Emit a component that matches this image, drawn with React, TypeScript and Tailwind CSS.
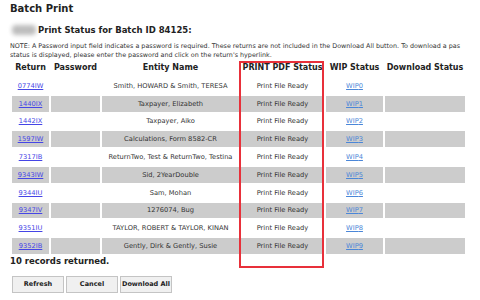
const rows = [
  { id: "0774IW", name: "Smith, HOWARD & Smith, TERESA" },
  { id: "1440IX", name: "Taxpayer, Elizabeth" },
  { id: "1442IX", name: "Taxpayer, Aiko" },
  { id: "1597IW", name: "Calculations, Form 8582-CR" },
  { id: "7317IB", name: "ReturnTwo, Test & ReturnTwo, Testina" },
  { id: "9343IW", name: "Sid, 2YearDouble" },
  { id: "9344IU", name: "Sam, Mohan" },
  { id: "9347IV", name: "1276074, Bug" },
  { id: "9351IU", name: "TAYLOR, ROBERT & TAYLOR, KINAN" },
  { id: "9352IB", name: "Gently, Dirk & Gently, Susie" },
];

export default function App() {
  return (
    <div
      className="w-[480px] h-[300px] overflow-hidden bg-white text-[#333] pl-[10px]"
      style={{ fontFamily: '"DejaVu Sans", Verdana, sans-serif' }}
    >
      <h1 className="pt-[3px] text-[10px] font-bold leading-[12px] text-[#222]">Batch Print</h1>

      <div className="mt-[9px] flex items-center h-[12px]">
        <div className="ml-[2px] w-[24px] h-[10px] bg-[#bdbdbd] rounded-sm blur-[2px]" />
        <h2 className="ml-[2px] text-[8.5px] font-bold leading-[12px] text-[#222]">
          Print Status for Batch ID 84125:
        </h2>
      </div>

      <div className="mt-[6px] w-[470px] overflow-hidden">
        <p className="text-[6.4px] leading-[9px] whitespace-nowrap">
          NOTE: A Password input field indicates a password is required. These returns are not included in the Download All button. To download a pas
          <br />
          status is displayed, please enter the password and click on the return's hyperlink.
        </p>
      </div>

      <div className="relative mt-[-2px]">
        <table className="border-separate border-spacing-[2px] text-[6.7px]">
          <thead>
            <tr className="h-[16px] text-[8px] font-bold text-[#222]">
              <th className="w-[37px] p-0">Return</th>
              <th className="w-[49px] p-0">Password</th>
              <th className="w-[137px] p-0">Entity Name</th>
              <th className="w-[83px] p-0">PRINT PDF Status</th>
              <th className="w-[57px] p-0">WIP Status</th>
              <th className="w-[80px] p-0 whitespace-nowrap">Download Status</th>
            </tr>
          </thead>
          <tbody>
            {rows.map((r, i) => {
              const bg = i % 2 === 1 ? "bg-[#cccccc]" : "bg-white";
              return (
                <tr key={r.id} className="h-[15.8px] text-center">
                  <td className={`${bg} p-0 leading-[10px]`}>
                    <a href="#" className="text-[#4545e6] underline">{r.id}</a>
                  </td>
                  <td className={`${bg} p-0`} />
                  <td className={`${bg} p-0 leading-[10px] whitespace-nowrap`}>{r.name}</td>
                  <td className={`${bg} p-0 leading-[10px]`}>Print File Ready</td>
                  <td className={`${bg} p-0 leading-[10px]`}>
                    <a href="#" className="text-[#4a86d8] underline">WIP{i}</a>
                  </td>
                  <td className={`${bg} p-0`} />
                </tr>
              );
            })}
          </tbody>
        </table>
        <div className="absolute left-[229px] top-[3px] w-[85px] h-[207px] border-2 border-[#e8303a] pointer-events-none" />
      </div>

      <p className="mt-[0px] text-[8.5px] font-bold leading-[11px] text-[#222]">10 records returned.</p>

      <div className="mt-[9px] ml-[2px] flex gap-[2px]">
        {["Refresh", "Cancel", "Download All"].map((b) => (
          <button
            key={b}
            className="h-[17px] w-[52px] bg-[#f0f0f0] border border-[#c4c4c4] text-[6.5px] font-bold text-[#222] whitespace-nowrap"
          >
            {b}
          </button>
        ))}
      </div>
    </div>
  );
}
